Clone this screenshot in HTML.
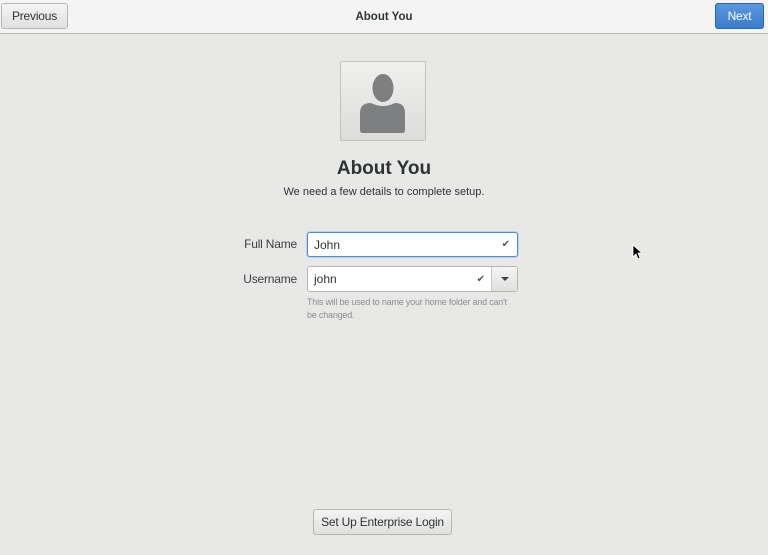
<!DOCTYPE html>
<html><head><style>
*{box-sizing:border-box;margin:0;padding:0}
body{width:768px;height:555px;background:#e8e8e7;font-family:"Liberation Sans",sans-serif;color:#2e3436;position:relative;overflow:hidden}
.hdr{position:absolute;left:0;top:0;width:768px;height:34px;background:#f4f4f4;border-bottom:1px solid #b6b6b3}
.btn{position:absolute;border:1px solid #b6b6b3;border-radius:3px;background:linear-gradient(#f4f4f4,#e0e0df);font-size:12px;display:flex;align-items:center;justify-content:center;color:#2e3436;white-space:nowrap;letter-spacing:-0.2px}
.abs{position:absolute;white-space:nowrap}
.entry{position:absolute;background:#fff;border:1px solid #b6b6b3;border-radius:3px;font-size:12px;padding-left:6px;display:flex;align-items:center}
.lbl{position:absolute;right:471px;font-size:12px;color:#3b3f40;letter-spacing:-0.2px}
</style></head><body>
<div class="hdr"></div>
<div class="btn" style="left:1px;top:3px;width:67px;height:26px">Previous</div>
<div class="abs" style="left:0;width:768px;top:11px;text-align:center;font-size:11.5px;font-weight:bold">About You</div>
<div class="btn" style="left:715px;top:3px;width:49px;height:26px;background:linear-gradient(#5a98dd,#3b7ccc);border-color:#2a66b3;color:#fff">Next</div>
<div class="abs" style="left:340px;top:61px;width:86px;height:80px;border:1px solid #c2c2c0;border-radius:2px;background:linear-gradient(#f0f0ef,#dcdcdb)">
<svg width="86" height="80" viewBox="0 0 86 80" style="position:absolute;left:-1px;top:-1px">
<ellipse cx="43" cy="27" rx="10.5" ry="14" fill="#7d7f80"/>
<path d="M20 69 V52 Q20 42 31 42 Q43 48 55 42 Q65 42 65 52 V69 Q65 72 62 72 H23 Q20 72 20 69Z" fill="#7d7f80"/>
</svg></div>
<div class="abs" style="left:0;width:768px;top:158px;text-align:center;font-size:19px;font-weight:bold">About You</div>
<div class="abs" style="left:0;width:768px;top:186px;text-align:center;font-size:11px">We need a few details to complete setup.</div>
<div class="lbl" style="top:237px">Full Name</div>
<div class="entry" style="left:307px;top:232px;width:211px;height:25px;border:1px solid #4a90d9;box-shadow:0 0 0 1px rgba(74,144,217,.25)">John<span style="position:absolute;right:7px;font-size:10px;color:#555">✔</span></div>
<div class="lbl" style="top:272px">Username</div>
<div class="entry" style="left:307px;top:266px;width:211px;height:26px">john<span style="position:absolute;right:32px;font-size:10px;color:#555">✔</span>
<div style="position:absolute;right:0;top:0;width:26px;height:24px;border-left:1px solid #c8c8c6;background:linear-gradient(#f4f4f4,#e0e0df);border-radius:0 3px 3px 0"><div style="position:absolute;left:9px;top:10px;border-left:4px solid transparent;border-right:4px solid transparent;border-top:4px solid #3b3f40"></div></div></div>
<div class="abs" style="left:307px;top:296px;font-size:9px;line-height:12.5px;color:#8b8e8f;letter-spacing:-0.2px">This will be used to name your home folder and can't<br>be changed.</div>
<div class="btn" style="left:313px;top:509px;width:139px;height:26px">Set Up Enterprise Login</div>
<svg class="abs" style="left:632px;top:244px" width="10" height="16" viewBox="0 0 10 16"><path d="M1 1 V13 L4 10 L6 15 L8 14 L6 9 H10Z" fill="#000" stroke="#fff" stroke-width="0.8"/></svg>
</body></html>
